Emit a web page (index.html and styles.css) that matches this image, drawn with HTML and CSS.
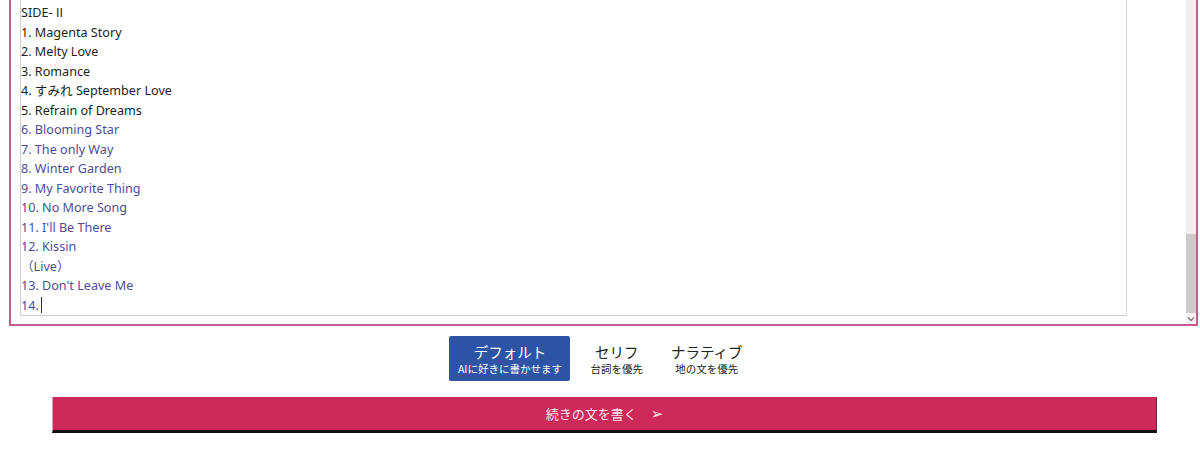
FILE: index.html
```html
<!DOCTYPE html>
<html lang="ja">
<head>
<meta charset="utf-8">
<title>Editor</title>
<link rel="stylesheet" href="styles.css">
</head>
<body>
<div class="frame">
  <div class="editor">
    <div class="text">
      <div class="line">SIDE-<span class="numeral">Ⅱ</span></div>
      <div class="line">1. Magenta Story</div>
      <div class="line">2. Melty Love</div>
      <div class="line">3. Romance</div>
      <div class="line">4. すみれ September Love</div>
      <div class="line">5. Refrain of Dreams</div>
      <div class="line ai">6. Blooming Star</div>
      <div class="line ai">7. The only Way</div>
      <div class="line ai">8. Winter Garden</div>
      <div class="line ai">9. My Favorite Thing</div>
      <div class="line ai">10. No More Song</div>
      <div class="line ai">11. I'll Be There</div>
      <div class="line ai">12. Kissin</div>
      <div class="line ai">（Live）</div>
      <div class="line ai">13. Don't Leave Me</div>
      <div class="line ai">14.<span class="caret"></span></div>
    </div>
  </div>
  <div class="scrollbar">
    <div class="track"></div>
    <div class="thumb"></div>
    <div class="arrow"><svg width="8" height="6" viewBox="0 0 8 6"><path d="M1 1.5 L4 4.5 L7 1.5" fill="none" stroke="#777" stroke-width="1.3"/></svg></div>
  </div>
</div>

<div class="modes">
  <div class="mode active">
    <div class="mode-title">デフォルト</div>
    <div class="mode-sub">AIに好きに書かせます</div>
  </div>
  <div class="mode">
    <div class="mode-title">セリフ</div>
    <div class="mode-sub">台詞を優先</div>
  </div>
  <div class="mode narrative">
    <div class="mode-title">ナラティブ</div>
    <div class="mode-sub">地の文を優先</div>
  </div>
</div>

<div class="continue">
  <span class="continue-label">続きの文を書く</span><span class="continue-arrow">➢</span>
</div>
</body>
</html>
```

FILE: styles.css
```css
html, body {
  margin: 0;
  padding: 0;
  background: #ffffff;
}

body {
  font-family: "Noto Sans", "Noto Sans CJK JP", sans-serif;
  width: 1200px;
  height: 454px;
  overflow: hidden;
}

.frame {
  box-sizing: border-box;
  display: flex;
  margin-left: 9px;
  width: 1189px;
  height: 326px;
  border: 2px solid #c75b8b;
  border-top: none;
  padding-left: 9px;
}

.editor {
  width: 1105px;
  height: 315px;
  border-left: 1px solid #d2d2d2;
  border-right: 1px solid #dadada;
  border-bottom: 1px solid #cfcfcf;
  overflow: hidden;
}

.text {
  padding: 3px 0 0 0;
  font-size: 12.6px;
  line-height: 19.5px;
  color: #1e1e1e;
}

.numeral {
  margin-left: 1px;
  font-family: "Noto Sans CJK JP", sans-serif;
  font-size: 12px;
  line-height: 1;
}

.line.ai {
  color: #4d4c98;
}

.caret {
  display: inline-block;
  width: 1px;
  height: 16px;
  margin-left: 2px;
  vertical-align: -3px;
  background: #333;
}

.scrollbar {
  margin-left: auto;
  width: 10px;
  height: 324px;
  display: flex;
  flex-direction: column;
}

.track {
  height: 234px;
  background: #efefef;
}

.thumb {
  height: 79px;
  background: #cbcbcb;
}

.arrow {
  flex: 1;
  background: #f3f3f3;
  display: flex;
  align-items: center;
  justify-content: center;
}

.modes {
  display: flex;
  justify-content: center;
  align-items: flex-start;
  margin-top: 10px;
  padding-left: 6px;
  gap: 6px;
}

.mode {
  height: 45px;
  padding: 0 14px;
  box-sizing: border-box;
  display: flex;
  flex-direction: column;
  align-items: center;
  justify-content: center;
  color: #222;
  white-space: nowrap;
  font-family: "Noto Sans CJK JP", sans-serif;
}

.mode.narrative {
  padding-left: 8px;
}

.mode.active {
  width: 121px;
  padding: 0;
  background: #2e55a5;
  border-radius: 2px;
  color: #ffffff;
}

.mode-title {
  font-size: 14.5px;
  line-height: 19px;
}

.mode-sub {
  font-size: 10.5px;
  line-height: 15px;
}

.continue {
  margin: 16px 0 0 52px;
  width: 1103px;
  height: 33px;
  background: #cd2a5b;
  border-left: 1px solid #d9a3b4;
  border-right: 1px solid #5a2a38;
  border-bottom: 3px solid #141010;
  display: flex;
  align-items: center;
  justify-content: center;
  color: #fbe7ee;
  font-family: "Noto Sans CJK JP", sans-serif;
  font-size: 13px;
}

.continue-arrow {
  margin-left: 14px;
  font-family: "DejaVu Sans", sans-serif;
  font-size: 15px;
}
```
